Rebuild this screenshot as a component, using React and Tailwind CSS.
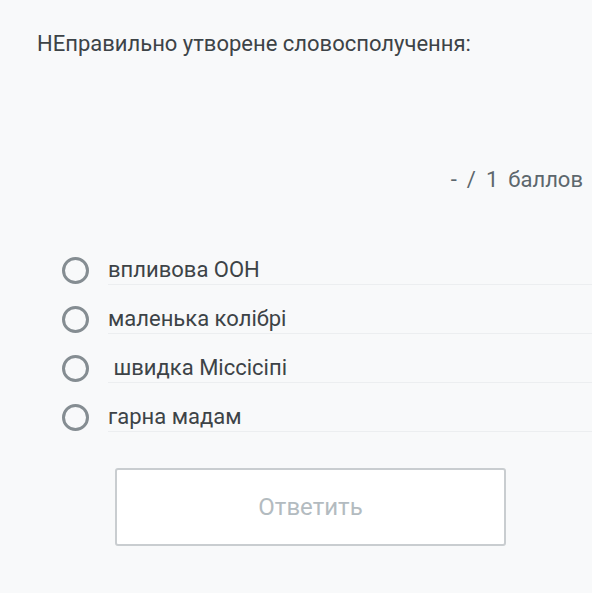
import React from 'react';

const options = ['впливова ООН', 'маленька колібрі', '\u00a0швидка Міссісіпі', 'гарна мадам'];

export default function App() {
  return (
    <div className="w-full h-[593px] bg-[#f8f9fa] font-['Roboto',sans-serif] text-[#3d4347] overflow-hidden">
      <div className="pt-[30px] pl-[37px] text-[22px] leading-[28px]">НЕправильно утворене словосполучення:</div>

      <div className="mt-[108px] pr-[9px] flex justify-end items-center gap-[10px] text-[22px] leading-[28px] text-[#5d676d]">
        <span>-</span>
        <span>/</span>
        <span>1</span>
        <span>баллов</span>
      </div>

      <div className="mt-[61px] flex flex-col">
        {options.map((opt, i) => (
          <div key={i} className="flex items-start h-[49px]">
            <div className="w-[108px] h-[30px] flex items-center pl-[62px]">
              <div className="w-[27px] h-[27px] rounded-full border-[3px] border-[#858d92]" />
            </div>
            <div className="flex-1 h-[30px] flex items-center border-b border-[#eceef0] text-[22px] leading-[26px]">
              {opt}
            </div>
          </div>
        ))}
      </div>

      <div className="mt-[17px] ml-[115px] w-[391px] h-[78px] bg-white border-2 border-[#c9cdd0] rounded-[3px] flex items-center justify-center text-[24px] text-[#b3bbc0]">
        Ответить
      </div>
    </div>
  );
}
